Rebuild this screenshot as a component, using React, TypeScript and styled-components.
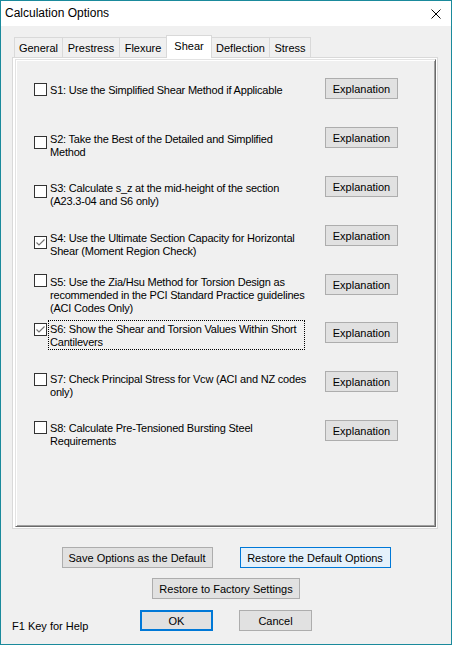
import styled, { createGlobalStyle } from 'styled-components';

const GlobalStyle = createGlobalStyle`
    html, body {
        margin: 0;
        padding: 0;
        background: #f0f0f0;
        overflow: hidden;
    }

    * {
        box-sizing: border-box;
    }
`;

const Window = styled.div`
    width: 452px;
    height: 645px;
    border: 1px solid #1a8a9c;
    background: #f0f0f0;
    display: flex;
    flex-direction: column;
    font-family: 'Liberation Sans', Arial, sans-serif;
    font-size: 11px;
    color: #000;
`;

const TitleBar = styled.div`
    height: 25px;
    background: #fff;
    display: flex;
    align-items: center;
    justify-content: space-between;
    padding: 0 10px 0 4px;
`;

const Title = styled.span`
    font-size: 12px;
    line-height: 25px;
`;

const Content = styled.div`
    padding: 9px 13px 0 11px;
`;

const TabStrip = styled.div`
    display: flex;
    align-items: flex-end;
    padding-left: 2px;
`;

const Tab = styled.div<{ $w: number; $active?: boolean }>`
    width: ${(p) => p.$w}px;
    height: ${(p) => (p.$active ? 23 : 20)}px;
    margin-left: -1px;
    margin-bottom: ${(p) => (p.$active ? -1 : 0)}px;
    border: 1px solid #d9d9d9;
    border-bottom: 0;
    background: ${(p) => (p.$active ? '#fff' : '#f0f0f0')};
    position: relative;
    z-index: ${(p) => (p.$active ? 1 : 0)};
    display: flex;
    align-items: center;
    justify-content: center;
    padding-bottom: ${(p) => (p.$active ? 2 : 0)}px;

    &:first-child {
        margin-left: 0;
    }
`;

const Panel = styled.div`
    height: 472px;
    border: 1px solid #d9d9d9;
    background: #fff;
    padding: 1px 1px 1px 2px;
`;

const Frame = styled.div`
    height: 468px;
    width: 421px;
    background: #f0f0f0;
    border: 1px solid;
    border-color: #e3e3e3 #696969 #696969 #e3e3e3;
    box-shadow: inset 1px 1px #fff, inset -1px -1px #a0a0a0;
    padding: 18px 0 0 18px;
`;

const OptionRow = styled.div<{ $h: number }>`
    height: ${(p) => p.$h}px;
    display: flex;
    align-items: flex-start;
`;

const CheckBox = styled.span<{ $top: number }>`
    width: 13px;
    height: 13px;
    margin-top: ${(p) => p.$top}px;
    border: 1px solid #333;
    background: #fff;
    display: flex;
    align-items: center;
    justify-content: center;
    flex: none;
`;

const Label = styled.div<{ $top: number; $focused?: boolean }>`
    width: 255px;
    margin: ${(p) => p.$top}px 0 0 2px;
    padding: 2px 0 0 1px;
    line-height: 13px;
    letter-spacing: -0.2px;
    white-space: nowrap;
    outline: ${(p) => (p.$focused ? '1px dotted #000' : 'none')};
`;

const Button = styled.button<{ $w: number; $variant?: 'hover' | 'default' }>`
    width: ${(p) => p.$w}px;
    height: 21px;
    padding: 0;
    font-family: 'Liberation Sans', Arial, sans-serif;
    font-size: 11px;
    color: #000;
    background: ${(p) => (p.$variant === 'hover' ? '#e5f1fb' : '#e1e1e1')};
    border: ${(p) => (p.$variant === 'default' ? 2 : 1)}px solid
        ${(p) => (p.$variant ? '#0078d7' : '#adadad')};
    flex: none;
`;

const ExplainButton = styled(Button)`
    margin-left: 21px;
`;

const Footer = styled.div`
    margin-top: 18px;
    display: flex;
    flex-direction: column;
    align-items: center;
`;

const ButtonRow = styled.div<{ $gap: number; $top: number }>`
    display: flex;
    gap: ${(p) => p.$gap}px;
    margin-top: ${(p) => p.$top}px;
`;

const LastRow = styled.div`
    margin-top: 11px;
    width: 100%;
    display: grid;
    grid-template-columns: 1fr auto 1fr;
`;

const HelpText = styled.span`
    align-self: end;
    margin: 0 0 -2px 11px;
    line-height: 13px;
`;

const TABS = [
    { name: 'General', w: 49 },
    { name: 'Prestress', w: 58 },
    { name: 'Flexure', w: 48 },
    { name: 'Shear', w: 46, active: true },
    { name: 'Deflection', w: 59 },
    { name: 'Stress', w: 42 },
];

const OPTIONS = [
    { lines: ['S1: Use the Simplified Shear Method if Applicable'], h: 49, text: 4, box: 5 },
    { lines: ['S2: Take the Best of the Detailed and Simplified', 'Method'], h: 49, text: 4, box: 9 },
    { lines: ['S3: Calculate s_z at the mid-height of the section', '(A23.3-04 and S6 only)'], h: 49, text: 4, box: 9 },
    {
        lines: ['S4: Use the Ultimate Section Capacity for Horizontal', 'Shear (Moment Region Check)'],
        h: 49,
        text: 5,
        box: 11,
        checked: true,
    },
    {
        lines: [
            'S5: Use the Zia/Hsu Method for Torsion Design as',
            'recommended in the PCI Standard Practice guidelines',
            '(ACI Codes Only)',
        ],
        h: 48,
        text: 0,
        box: 0,
    },
    {
        lines: ['S6: Show the Shear and Torsion Values Within Short', 'Cantilevers'],
        h: 49,
        text: -1,
        box: 1,
        checked: true,
        focused: true,
    },
    { lines: ['S7: Check Principal Stress for Vcw (ACI and NZ codes', 'only)'], h: 49, text: 0, box: 2 },
    { lines: ['S8: Calculate Pre-Tensioned Bursting Steel', 'Requirements'], h: 49, text: 0, box: 1 },
];

const CloseIcon = () => (
    <svg width="10" height="10" viewBox="0 0 10 10">
        <path d="M0.5 0.5 L9.5 9.5 M9.5 0.5 L0.5 9.5" stroke="#000" strokeWidth="1" fill="none" />
    </svg>
);

const CheckMark = () => (
    <svg width="11" height="11" viewBox="0 0 11 11">
        <polyline points="1.5,5.5 4,8 9.5,2.5" stroke="#707070" strokeWidth="1.1" fill="none" />
    </svg>
);

const App = () => {
    return (
        <>
            <GlobalStyle />
            <Window>
                <TitleBar>
                    <Title>Calculation Options</Title>
                    <CloseIcon />
                </TitleBar>
                <Content>
                    <TabStrip>
                        {TABS.map((t) => (
                            <Tab key={t.name} $w={t.w} $active={t.active}>
                                {t.name}
                            </Tab>
                        ))}
                    </TabStrip>
                    <Panel>
                        <Frame>
                            {OPTIONS.map((o, i) => (
                                <OptionRow key={i} $h={o.h}>
                                    <CheckBox $top={o.box}>{o.checked && <CheckMark />}</CheckBox>
                                    <Label $top={o.text} $focused={o.focused}>
                                        {o.lines.map((l, j) => (
                                            <div key={j}>{l}</div>
                                        ))}
                                    </Label>
                                    <ExplainButton $w={73}>Explanation</ExplainButton>
                                </OptionRow>
                            ))}
                        </Frame>
                    </Panel>
                </Content>
                <Footer>
                    <ButtonRow $gap={27} $top={0}>
                        <Button $w={151}>Save Options as the Default</Button>
                        <Button $w={151} $variant="hover">
                            Restore the Default Options
                        </Button>
                    </ButtonRow>
                    <ButtonRow $gap={0} $top={10}>
                        <Button $w={148}>Restore to Factory Settings</Button>
                    </ButtonRow>
                    <LastRow>
                        <HelpText>F1 Key for Help</HelpText>
                        <ButtonRow $gap={26} $top={0}>
                            <Button $w={73} $variant="default">
                                OK
                            </Button>
                            <Button $w={73}>Cancel</Button>
                        </ButtonRow>
                    </LastRow>
                </Footer>
            </Window>
        </>
    );
};

export default App;
